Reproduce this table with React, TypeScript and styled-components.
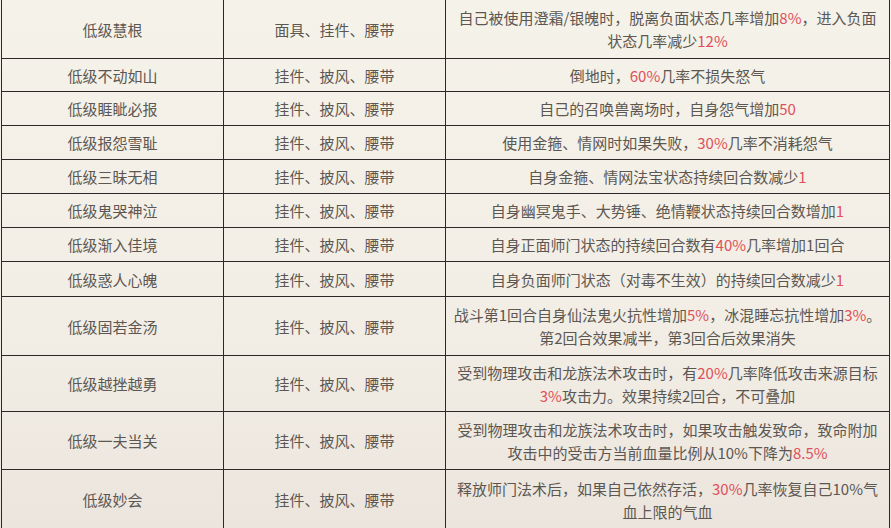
import React from 'react';
import styled, { createGlobalStyle } from 'styled-components';

const GlobalStyle = createGlobalStyle`
  html, body {
    margin: 0;
    padding: 0;
    background: #f3efe6;
  }
  body {
    font-family: "Noto Sans CJK SC", "Noto Sans", sans-serif;
  }
`;

type Seg = string | { red: string };

type Row = {
  name: string;
  slots: string;
  desc: Seg[][];
  h: number;
};

const rows: Row[] = [
  {
    name: '低级慧根',
    slots: '面具、挂件、腰带',
    desc: [
      ['自己被使用澄霜/银魄时，脱离负面状态几率增加', { red: '8%' }, '，进入负面'],
      ['状态几率减少', { red: '12%' }],
    ],
    h: 59,
  },
  { name: '低级不动如山', slots: '挂件、披风、腰带', desc: [['倒地时，', { red: '60%' }, '几率不损失怒气']], h: 33 },
  { name: '低级睚眦必报', slots: '挂件、披风、腰带', desc: [['自己的召唤兽离场时，自身怨气增加', { red: '50' }]], h: 34 },
  { name: '低级报怨雪耻', slots: '挂件、披风、腰带', desc: [['使用金箍、情网时如果失败，', { red: '30%' }, '几率不消耗怨气']], h: 34 },
  { name: '低级三昧无相', slots: '挂件、披风、腰带', desc: [['自身金箍、情网法宝状态持续回合数减少', { red: '1' }]], h: 34 },
  { name: '低级鬼哭神泣', slots: '挂件、披风、腰带', desc: [['自身幽冥鬼手、大势锤、绝情鞭状态持续回合数增加', { red: '1' }]], h: 34 },
  { name: '低级渐入佳境', slots: '挂件、披风、腰带', desc: [['自身正面师门状态的持续回合数有', { red: '40%' }, '几率增加1回合']], h: 34 },
  { name: '低级惑人心魄', slots: '挂件、披风、腰带', desc: [['自身负面师门状态（对毒不生效）的持续回合数减少', { red: '1' }]], h: 35 },
  {
    name: '低级固若金汤',
    slots: '挂件、披风、腰带',
    desc: [
      ['战斗第1回合自身仙法鬼火抗性增加', { red: '5%' }, '，冰混睡忘抗性增加', { red: '3%' }, '。'],
      ['第2回合效果减半，第3回合后效果消失'],
    ],
    h: 59,
  },
  {
    name: '低级越挫越勇',
    slots: '挂件、披风、腰带',
    desc: [
      ['受到物理攻击和龙族法术攻击时，有', { red: '20%' }, '几率降低攻击来源目标'],
      [{ red: '3%' }, '攻击力。效果持续2回合，不可叠加'],
    ],
    h: 56,
  },
  {
    name: '低级一夫当关',
    slots: '挂件、披风、腰带',
    desc: [
      ['受到物理攻击和龙族法术攻击时，如果攻击触发致命，致命附加'],
      ['攻击中的受击方当前血量比例从10%下降为', { red: '8.5%' }],
    ],
    h: 58,
  },
  {
    name: '低级妙会',
    slots: '挂件、披风、腰带',
    desc: [
      ['释放师门法术后，如果自己依然存活，', { red: '30%' }, '几率恢复自己10%气'],
      ['血上限的气血'],
    ],
    h: 60,
  },
];

const Page = styled.div`
  width: 891px;
  height: 528px;
  overflow: hidden;
  background: linear-gradient(180deg, #f5f2e9 0%, #f2eee5 60%, #ebe5de 100%);
`;

const Table = styled.table`
  border-collapse: collapse;
  table-layout: fixed;
  width: 888px;
  margin: -1px 0 0 1px;
`;

const Col = styled.col<{ $w: number }>`
  width: ${({ $w }) => $w}px;
`;

const Tr = styled.tr<{ $h: number }>`
  height: ${({ $h }) => $h}px;
`;

const Cell = styled.td`
  border: 1px solid #2b2825;
  padding: 0;
  text-align: center;
  vertical-align: middle;
  color: #5c5752;
  font-size: 15px;
  line-height: 23px;
  letter-spacing: 0;
  white-space: nowrap;
  overflow: hidden;
`;

const Line = styled.div`
  display: block;
`;

const Red = styled.span`
  color: #e0505c;
`;

const renderLine = (line: Seg[]) =>
  line.map((s, i) => (typeof s === 'string' ? <span key={i}>{s}</span> : <Red key={i}>{s.red}</Red>));

export default function App() {
  return (
    <>
      <GlobalStyle />
      <Page>
        <Table>
          <colgroup>
            <Col $w={222} />
            <Col $w={222} />
            <Col $w={444} />
          </colgroup>
          <tbody>
            {rows.map((r) => (
              <Tr key={r.name} $h={r.h}>
                <Cell>{r.name}</Cell>
                <Cell>{r.slots}</Cell>
                <Cell>
                  {r.desc.map((l, i) => (
                    <Line key={i}>{renderLine(l)}</Line>
                  ))}
                </Cell>
              </Tr>
            ))}
          </tbody>
        </Table>
      </Page>
    </>
  );
}
